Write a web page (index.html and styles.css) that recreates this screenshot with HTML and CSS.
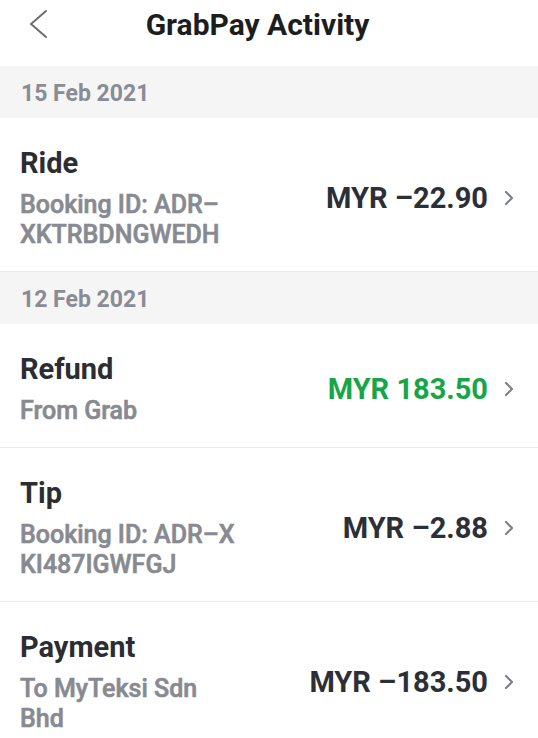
FILE: index.html
```html
<!DOCTYPE html>
<html lang="en">
<head>
<meta charset="utf-8">
<title>GrabPay Activity</title>
<link rel="stylesheet" href="styles.css">
</head>
<body>
<div class="screen">
  <header class="topbar">
    <button class="back" aria-label="Back">
      <svg width="20" height="30" viewBox="0 0 20 30"><polyline points="17,2 2,15 17,28" fill="none" stroke="#6d6d6d" stroke-width="2" stroke-linecap="round" stroke-linejoin="round"/></svg>
    </button>
    <h1 class="title">GrabPay Activity</h1>
    <div class="spacer"></div>
  </header>

  <div class="date">15 Feb 2021</div>
  <div class="row">
    <div class="info">
      <div class="kind">Ride</div>
      <div class="desc">Booking ID: ADR–<br>XKTRBDNGWEDH</div>
    </div>
    <div class="amount">MYR –22.90</div>
    <svg class="chev" width="10" height="16" viewBox="0 0 10 16"><polyline points="2,2 8,8 2,14" fill="none" stroke="#7d8087" stroke-width="2.2" stroke-linecap="round" stroke-linejoin="round"/></svg>
  </div>

  <div class="date">12 Feb 2021</div>
  <div class="row">
    <div class="info">
      <div class="kind">Refund</div>
      <div class="desc">From Grab</div>
    </div>
    <div class="amount credit">MYR 183.50</div>
    <svg class="chev" width="10" height="16" viewBox="0 0 10 16"><polyline points="2,2 8,8 2,14" fill="none" stroke="#7d8087" stroke-width="2.2" stroke-linecap="round" stroke-linejoin="round"/></svg>
  </div>
  <div class="row">
    <div class="info">
      <div class="kind">Tip</div>
      <div class="desc">Booking ID: ADR–X<br>KI487IGWFGJ</div>
    </div>
    <div class="amount">MYR –2.88</div>
    <svg class="chev" width="10" height="16" viewBox="0 0 10 16"><polyline points="2,2 8,8 2,14" fill="none" stroke="#7d8087" stroke-width="2.2" stroke-linecap="round" stroke-linejoin="round"/></svg>
  </div>
  <div class="row">
    <div class="info">
      <div class="kind">Payment</div>
      <div class="desc">To MyTeksi Sdn<br>Bhd</div>
    </div>
    <div class="amount">MYR –183.50</div>
    <svg class="chev" width="10" height="16" viewBox="0 0 10 16"><polyline points="2,2 8,8 2,14" fill="none" stroke="#7d8087" stroke-width="2.2" stroke-linecap="round" stroke-linejoin="round"/></svg>
  </div>
</div>
</body>
</html>
```

FILE: styles.css
```css
* { box-sizing: border-box; }
html, body {
  margin: 0;
  padding: 0;
  background: #ffffff;
}
body {
  font-family: Roboto, "Liberation Sans", sans-serif;
  width: 538px;
  overflow: hidden;
}
.screen {
  display: flex;
  flex-direction: column;
}
.topbar {
  display: flex;
  align-items: flex-start;
  height: 66px;
  padding-top: 7px;
}
.back {
  width: 76px;
  padding: 2px 0 0 29px;
  border: 0;
  background: none;
  display: flex;
  align-items: flex-start;
  height: 36px;
}
.title {
  flex: 1;
  margin: 0;
  text-align: center;
  font-size: 30px;
  line-height: 36px;
  font-weight: 700;
  color: #1d1d1f;
}
.spacer { width: 99px; }
.date {
  height: 52px;
  padding: 4px 0 0 21px;
  line-height: 48px;
  font-size: 23px;
  font-weight: 700;
  color: #8a8c93;
  background: #f5f5f6;
}
.row {
  display: flex;
  align-items: center;
  padding: 28px 24px 21px 20px;
  border-bottom: 1px solid #ebebed;
}
.info {
  flex: 1;
  min-width: 0;
}
.kind {
  font-size: 29px;
  line-height: 34px;
  font-weight: 700;
  color: #2b2d33;
}
.desc {
  margin-top: 10px;
  font-size: 25px;
  line-height: 30px;
  font-weight: 500;
  color: #878a91;
  -webkit-text-stroke: 0.6px #878a91;
}
.amount {
  font-size: 29px;
  font-weight: 700;
  color: #2c2f36;
  white-space: nowrap;
}
.amount.credit { color: #16a648; }
.chev {
  margin-left: 16px;
  flex: none;
}
```
